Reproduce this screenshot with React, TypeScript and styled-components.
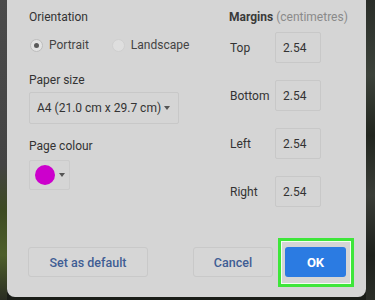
import styled, { createGlobalStyle } from "styled-components";

const GlobalStyle = createGlobalStyle`
  html, body {
    margin: 0;
    padding: 0;
    background: #1d221c;
  }
  body {
    font-family: Roboto, "Liberation Sans", Arial, sans-serif;
    color: #333;
  }
  * {
    box-sizing: border-box;
  }
`;

const margins = ["Top", "Bottom", "Left", "Right"];

export default function App() {
  return (
    <>
      <GlobalStyle />
      <Scene>
        <LeftEdge />
        <Dialog>
          <Body>
            <Column>
              <SectionTitle>Orientation</SectionTitle>
              <RadioRow>
                <RadioOption>
                  <Radio $checked />
                  Portrait
                </RadioOption>
                <RadioOption>
                  <Radio />
                  Landscape
                </RadioOption>
              </RadioRow>
              <SectionTitle $gap={19}>Paper size</SectionTitle>
              <Select>
                A4 (21.0 cm x 29.7 cm)
                <Caret />
              </Select>
              <SectionTitle $gap={14}>Page colour</SectionTitle>
              <ColourButton>
                <Swatch />
                <Caret />
              </ColourButton>
            </Column>
            <Column>
              <SectionTitle>
                <b>Margins</b> <Hint>(centimetres)</Hint>
              </SectionTitle>
              <MarginList>
                {margins.map((m) => (
                  <MarginRow key={m}>
                    <MarginLabel>{m}</MarginLabel>
                    <MarginInput>2.54</MarginInput>
                  </MarginRow>
                ))}
              </MarginList>
            </Column>
          </Body>
          <Footer>
            <FlatButton $width={120}>Set as default</FlatButton>
            <Actions>
              <FlatButton $width={80}>Cancel</FlatButton>
              <OkWrap>
                <PrimaryButton>OK</PrimaryButton>
                <Highlight />
              </OkWrap>
            </Actions>
          </Footer>
        </Dialog>
        <RightEdge />
      </Scene>
    </>
  );
}

const Scene = styled.div`
  display: flex;
  width: 375px;
  height: 300px;
  overflow: hidden;
  background: linear-gradient(180deg, #262a25 0%, #1a1d18 100%);
`;

const LeftEdge = styled.div`
  width: 7px;
  flex-shrink: 0;
  background: linear-gradient(
    180deg,
    #4a4a4a 0%,
    #434343 55%,
    #3d4a22 70%,
    #4d5e2a 85%,
    #2a2d22 100%
  );
`;

const RightEdge = styled.div`
  flex: 1;
  background: linear-gradient(
    180deg,
    #2a2e29 0%,
    #3c423a 25%,
    #22261f 45%,
    #3a3d37 65%,
    #1e211c 85%,
    #2b2e28 100%
  );
`;

const Dialog = styled.div`
  width: 359px;
  height: 297px;
  flex-shrink: 0;
  background: #d5d5d5;
  border-radius: 0 0 8px 8px;
  padding: 9px 20px 20px 22px;
  display: flex;
  flex-direction: column;
`;

const Body = styled.div`
  display: grid;
  grid-template-columns: 200px 1fr;
  white-space: nowrap;
`;

const Column = styled.div`
  display: flex;
  flex-direction: column;
  align-items: flex-start;
  min-width: 0;
`;

const SectionTitle = styled.div<{ $gap?: number }>`
  font-size: 12px;
  line-height: 16px;
  color: #333;
  margin-top: ${({ $gap }) => $gap ?? 0}px;
  b {
    font-weight: 700;
    color: #3a3a3a;
  }
`;

const Hint = styled.span`
  color: #8a8a8a;
`;

const RadioRow = styled.div`
  display: flex;
  gap: 23px;
  margin-top: 12px;
  padding-left: 1px;
`;

const RadioOption = styled.label`
  display: flex;
  align-items: center;
  gap: 6px;
  font-size: 12px;
  line-height: 16px;
  color: #444;
`;

const Radio = styled.span<{ $checked?: boolean }>`
  width: 13px;
  height: 13px;
  border-radius: 50%;
  border: 1px solid ${({ $checked }) => ($checked ? "#bdbdbd" : "#cfcfcf")};
  background: ${({ $checked }) => ($checked ? "#e3e3e3" : "#dedede")};
  display: flex;
  align-items: center;
  justify-content: center;
  &::after {
    content: "";
    width: 5px;
    height: 5px;
    border-radius: 50%;
    background: ${({ $checked }) => ($checked ? "#5a5a5a" : "transparent")};
  }
`;

const Select = styled.div`
  margin-top: 4px;
  width: 150px;
  height: 32px;
  border: 1px solid #c8c8c8;
  border-radius: 2px;
  display: flex;
  align-items: center;
  justify-content: space-between;
  padding: 0 8px 0 7px;
  font-size: 12px;
  color: #333;
`;

const Caret = styled.span`
  width: 0;
  height: 0;
  border-left: 3.5px solid transparent;
  border-right: 3.5px solid transparent;
  border-top: 4px solid #555;
`;

const ColourButton = styled.div`
  margin-top: 6px;
  width: 41px;
  height: 30px;
  border: 1px solid #cbcbcb;
  border-radius: 2px;
  display: flex;
  align-items: center;
  gap: 4px;
  padding-left: 5px;
`;

const Swatch = styled.span`
  width: 20px;
  height: 20px;
  border-radius: 50%;
  background: #cc00cc;
`;

const MarginList = styled.div`
  display: flex;
  flex-direction: column;
  gap: 17px;
  margin-top: 7px;
`;

const MarginRow = styled.div`
  display: flex;
  align-items: center;
  padding-left: 1px;
`;

const MarginLabel = styled.span`
  width: 45px;
  font-size: 12px;
  color: #333;
`;

const MarginInput = styled.div`
  width: 46px;
  height: 31px;
  border: 1px solid #c8c8c8;
  border-radius: 2px;
  display: flex;
  align-items: center;
  padding-left: 7px;
  font-size: 12px;
  color: #333;
`;

const Footer = styled.div`
  margin-top: auto;
  display: flex;
  justify-content: space-between;
  align-items: center;
  margin-left: -1px;
`;

const Actions = styled.div`
  display: flex;
  gap: 12px;
`;

const FlatButton = styled.button<{ $width: number }>`
  width: ${({ $width }) => $width}px;
  height: 30px;
  border: 1px solid #c9c9c9;
  border-radius: 3px;
  background: #d6d6d6;
  color: #3f5d94;
  font-family: Roboto, "Liberation Sans", Arial, sans-serif;
  font-size: 12.5px;
  font-weight: 500;
  padding: 0;
`;

const OkWrap = styled.div`
  position: relative;
`;

const PrimaryButton = styled.button`
  width: 61px;
  height: 30px;
  border: none;
  border-radius: 3px;
  background: #2b7be2;
  color: #fff;
  font-family: Roboto, "Liberation Sans", Arial, sans-serif;
  font-size: 13px;
  font-weight: 700;
  padding: 0;
`;

const Highlight = styled.span`
  position: absolute;
  left: -7px;
  top: -9px;
  right: -8px;
  bottom: -10px;
  border: 3px solid #3ee63a;
  box-shadow: inset 0 0 0 1px #f2fff0;
  pointer-events: none;
`;
